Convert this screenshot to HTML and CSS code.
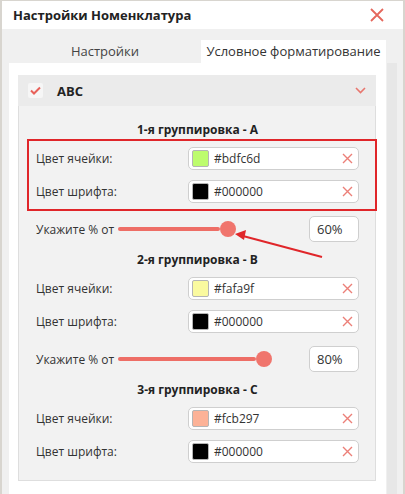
FILE: index.html
```html
<!DOCTYPE html>
<html>
<head>
    <title>Настройки Номенклатура</title>
    <link rel="stylesheet" href="styles.css">
</head>
<body>
    <div class="window">
        <div class="titlebar">
            <span class="title">Настройки Номенклатура</span>
            <svg class="close" width="14" height="14" viewBox="0 0 14 14"><path d="M1 1L13 13M13 1L1 13" stroke="#e5675c" stroke-width="1.8" fill="none"/></svg>
        </div>

        <div class="frame">
            <div class="tabs">
                <div class="tab">Настройки</div>
                <div class="tab active">Условное форматирование</div>
            </div>

            <div class="main">
                <div class="panel">
                    <div class="acc">
                        <div class="acc-head">
                            <span class="check"><svg width="11" height="9" viewBox="0 0 11 9"><path d="M1 4.5L4 7.5L10 1.5" stroke="#e8615a" stroke-width="2" fill="none"/></svg></span>
                            <span class="acc-title">ABC</span>
                            <svg class="chevron" width="11" height="7" viewBox="0 0 11 7"><path d="M1 1L5.5 5.5L10 1" stroke="#e8766e" stroke-width="1.6" fill="none"/></svg>
                        </div>
                        <div class="acc-body">

                            <div class="group">
                                <div class="group-title">1-я группировка - A</div>
                                <div class="field">
                                    <span class="label">Цвет ячейки:</span>
                                    <div class="color-input">
                                        <span class="swatch" style="background:#bdfc6d"></span>
                                        <span class="value">#bdfc6d</span>
                                        <svg class="clear" width="11" height="11" viewBox="0 0 11 11"><path d="M1 1L10 10M10 1L1 10" stroke="#ec7f78" stroke-width="1.4" fill="none"/></svg>
                                    </div>
                                </div>
                                <div class="field">
                                    <span class="label">Цвет шрифта:</span>
                                    <div class="color-input">
                                        <span class="swatch" style="background:#000000"></span>
                                        <span class="value">#000000</span>
                                        <svg class="clear" width="11" height="11" viewBox="0 0 11 11"><path d="M1 1L10 10M10 1L1 10" stroke="#ec7f78" stroke-width="1.4" fill="none"/></svg>
                                    </div>
                                </div>
                                <div class="slider-row">
                                    <span class="label">Укажите % от</span>
                                    <div class="slider">
                                        <div class="fill" style="width:60%"></div>
                                    </div>
                                    <div class="percent">60%</div>
                                </div>
                            </div>

                            <div class="group">
                                <div class="group-title">2-я группировка - B</div>
                                <div class="field">
                                    <span class="label">Цвет ячейки:</span>
                                    <div class="color-input">
                                        <span class="swatch" style="background:#fafa9f"></span>
                                        <span class="value">#fafa9f</span>
                                        <svg class="clear" width="11" height="11" viewBox="0 0 11 11"><path d="M1 1L10 10M10 1L1 10" stroke="#ec7f78" stroke-width="1.4" fill="none"/></svg>
                                    </div>
                                </div>
                                <div class="field">
                                    <span class="label">Цвет шрифта:</span>
                                    <div class="color-input">
                                        <span class="swatch" style="background:#000000"></span>
                                        <span class="value">#000000</span>
                                        <svg class="clear" width="11" height="11" viewBox="0 0 11 11"><path d="M1 1L10 10M10 1L1 10" stroke="#ec7f78" stroke-width="1.4" fill="none"/></svg>
                                    </div>
                                </div>
                                <div class="slider-row">
                                    <span class="label">Укажите % от</span>
                                    <div class="slider">
                                        <div class="fill" style="width:80%"></div>
                                    </div>
                                    <div class="percent">80%</div>
                                </div>
                            </div>

                            <div class="group">
                                <div class="group-title">3-я группировка - C</div>
                                <div class="field">
                                    <span class="label">Цвет ячейки:</span>
                                    <div class="color-input">
                                        <span class="swatch" style="background:#fcb297"></span>
                                        <span class="value">#fcb297</span>
                                        <svg class="clear" width="11" height="11" viewBox="0 0 11 11"><path d="M1 1L10 10M10 1L1 10" stroke="#ec7f78" stroke-width="1.4" fill="none"/></svg>
                                    </div>
                                </div>
                                <div class="field">
                                    <span class="label">Цвет шрифта:</span>
                                    <div class="color-input">
                                        <span class="swatch" style="background:#000000"></span>
                                        <span class="value">#000000</span>
                                        <svg class="clear" width="11" height="11" viewBox="0 0 11 11"><path d="M1 1L10 10M10 1L1 10" stroke="#ec7f78" stroke-width="1.4" fill="none"/></svg>
                                    </div>
                                </div>
                            </div>

                        </div>
                    </div>

                    <div class="acc collapsed">
                        <div class="acc-head">
                            <span class="check"></span>
                            <span class="acc-title">По Поставщику</span>
                            <svg class="chevron" width="7" height="11" viewBox="0 0 7 11"><path d="M1 1L5.5 5.5L1 10" stroke="#e8766e" stroke-width="1.6" fill="none"/></svg>
                        </div>
                    </div>
                </div>
                <div class="scrollbar"></div>
            </div>
        </div>

        <!-- annotation drawn over the form -->
        <svg class="annotation" width="405" height="494" viewBox="0 0 405 494">
            <rect x="28" y="140" width="348" height="70" fill="none" stroke="#e0262a" stroke-width="2"/>
            <path d="M322 257L243 236" stroke="#e0262a" stroke-width="2" fill="none"/>
            <path d="M235 234L246 230L244 240Z" fill="#e0262a"/>
        </svg>
    </div>
</body>
</html>
```

FILE: styles.css
```css
body { margin: 0; font-family: "Open Sans", Arial, sans-serif; color: #333; font-size: 12px; }
.window { position: relative; width: 405px; height: 494px; box-sizing: border-box; border-left: 2px solid #d8d5cf; border-right: 2px solid #d8d5cf; border-top: 1px solid #d8d5cf; overflow: hidden; }

.titlebar { height: 28px; display: flex; align-items: center; justify-content: space-between; padding: 0 19px 0 11px; background: #fff; }
.title { font-size: 13px; font-weight: bold; color: #222; }
.close { display: block; }

.frame { background: #f0f0f0; padding-left: 7px; height: 465px; }
.tabs { display: flex; width: 377px; padding-top: 11px; }
.tab { height: 23px; line-height: 23px; text-align: center; font-size: 13px; color: #444; }
.tab:first-child { width: 192px; }
.tab.active { width: 185px; background: #fff; color: #333; }

.main { display: flex; height: 431px; }
.panel { width: 377px; background: #fff; padding: 12px 10px 0 9px; box-sizing: border-box; }
.scrollbar { width: 10px; margin-left: 1px; background: #e7e7e7; }

.acc-head { height: 31px; display: flex; align-items: center; padding: 0 10px; background: #ebebeb; }
.check { width: 15px; height: 15px; background: #f6f6f6; border-radius: 2px; display: flex; align-items: center; justify-content: center; }
.acc-title { margin-left: 14px; font-size: 13px; font-weight: bold; color: #222; flex: 1; }
.chevron { margin-right: 0; }
.acc-body { background: #f2f2f2; border: 1px solid #dedede; border-top: none; padding: 15px 16px 17px 17px; }
.acc.collapsed { margin-top: 7px; }
.acc.collapsed .acc-head { background: #fff; }
.acc.collapsed .check { background: #eeeeee; }

.group + .group { margin-top: 9px; }
.group-title { height: 18px; line-height: 18px; text-align: center; font-weight: bold; font-size: 12px; color: #222; margin-bottom: 8px; }
.field { display: flex; align-items: center; justify-content: space-between; }
.field + .field { margin-top: 10px; }
.label { color: #333; }
.color-input { width: 171px; height: 23px; box-sizing: border-box; border: 1px solid #cfcfcf; border-radius: 5px; background: #fff; display: flex; align-items: center; padding: 0 5px 0 3px; }
.swatch { width: 15px; height: 15px; border: 1px solid #b5b5b5; border-radius: 2px; }
.value { margin-left: 5px; flex: 1; color: #333; }
.clear { display: block; }

.slider-row { display: flex; align-items: center; margin-top: 13px; height: 26px; }
.slider-row .label { width: 82px; }
.slider { position: relative; width: 183px; height: 16px; margin-right: 8px; }
.fill { position: relative; height: 16px; }
.fill::before { content: ""; position: absolute; left: 0; right: 8px; top: 6px; height: 4px; border-radius: 2px; background: #ee6e66; }
.fill::after { content: ""; position: absolute; right: -8px; top: 0; width: 16px; height: 16px; border-radius: 50%; background: #f0756d; }
.percent { width: 50px; height: 26px; box-sizing: border-box; border: 1px solid #cfcfcf; border-radius: 5px; background: #fff; line-height: 24px; padding-left: 7px; font-size: 13px; }

.annotation { position: absolute; left: -2px; top: -1px; pointer-events: none; }
```
